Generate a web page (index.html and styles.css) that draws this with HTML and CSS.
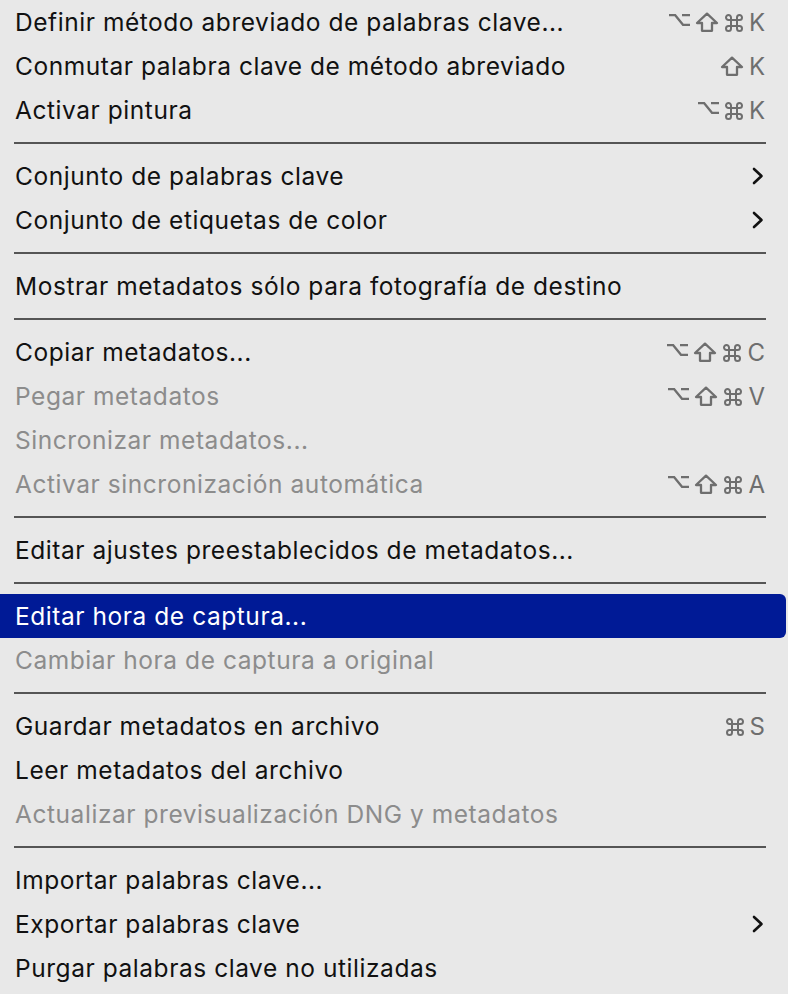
FILE: index.html
```html
<!DOCTYPE html>
<html lang="es">
<head>
<meta charset="utf-8">
<title>Menú Metadatos</title>
<link rel="stylesheet" href="styles.css">
</head>
<body>
<svg class="defs" width="0" height="0" aria-hidden="true">
  <defs>
    <symbol id="opt" viewBox="0 0 21 12"><path d="M0 1.2 H6.2 L14 10.8 H21 M13 1.2 H21" fill="none" stroke="currentColor" stroke-width="2.2"/></symbol>
    <symbol id="shift" viewBox="0 0 24 20"><path d="M12 1.6 L22 11 H17 V18.8 H7 V11 H2 Z" fill="none" stroke="currentColor" stroke-width="2.3" stroke-linejoin="round"/></symbol>
    <symbol id="cmd" viewBox="0 0 20 20"><path d="M7 7 H13 V13 H7 Z M7 7 V4.5 A2.5 2.5 0 1 0 4.5 7 H7 M13 7 V4.5 A2.5 2.5 0 1 1 15.5 7 H13 M13 13 V15.5 A2.5 2.5 0 1 0 15.5 13 H13 M7 13 V15.5 A2.5 2.5 0 1 1 4.5 13 H7" fill="none" stroke="currentColor" stroke-width="2"/></symbol>
    <symbol id="chev" viewBox="0 0 12 18"><path d="M2 2 L9.5 9 L2 16" fill="none" stroke="#111" stroke-width="2.6" stroke-linecap="round" stroke-linejoin="round"/></symbol>
  </defs>
</svg>
<div class="menu">
  <div class="item"><span class="label">Definir método abreviado de palabras clave...</span><span class="keys"><svg class="opt"><use href="#opt"/></svg><svg class="shift"><use href="#shift"/></svg><svg class="cmd"><use href="#cmd"/></svg><span class="key">K</span></span></div>
  <div class="item"><span class="label">Conmutar palabra clave de método abreviado</span><span class="keys"><svg class="shift"><use href="#shift"/></svg><span class="key">K</span></span></div>
  <div class="item"><span class="label">Activar pintura</span><span class="keys"><svg class="opt"><use href="#opt"/></svg><svg class="cmd"><use href="#cmd"/></svg><span class="key">K</span></span></div>
  <div class="sep"></div>
  <div class="item"><span class="label">Conjunto de palabras clave</span><svg class="chev"><use href="#chev"/></svg></div>
  <div class="item"><span class="label">Conjunto de etiquetas de color</span><svg class="chev"><use href="#chev"/></svg></div>
  <div class="sep"></div>
  <div class="item"><span class="label">Mostrar metadatos sólo para fotografía de destino</span></div>
  <div class="sep"></div>
  <div class="item"><span class="label">Copiar metadatos...</span><span class="keys"><svg class="opt"><use href="#opt"/></svg><svg class="shift"><use href="#shift"/></svg><svg class="cmd"><use href="#cmd"/></svg><span class="key">C</span></span></div>
  <div class="item disabled"><span class="label">Pegar metadatos</span><span class="keys"><svg class="opt"><use href="#opt"/></svg><svg class="shift"><use href="#shift"/></svg><svg class="cmd"><use href="#cmd"/></svg><span class="key">V</span></span></div>
  <div class="item disabled"><span class="label">Sincronizar metadatos...</span></div>
  <div class="item disabled"><span class="label">Activar sincronización automática</span><span class="keys"><svg class="opt"><use href="#opt"/></svg><svg class="shift"><use href="#shift"/></svg><svg class="cmd"><use href="#cmd"/></svg><span class="key">A</span></span></div>
  <div class="sep"></div>
  <div class="item"><span class="label">Editar ajustes preestablecidos de metadatos...</span></div>
  <div class="sep"></div>
  <div class="item selected"><span class="label">Editar hora de captura...</span></div>
  <div class="item disabled"><span class="label">Cambiar hora de captura a original</span></div>
  <div class="sep"></div>
  <div class="item"><span class="label">Guardar metadatos en archivo</span><span class="keys"><svg class="cmd"><use href="#cmd"/></svg><span class="key">S</span></span></div>
  <div class="item"><span class="label">Leer metadatos del archivo</span></div>
  <div class="item disabled"><span class="label">Actualizar previsualización DNG y metadatos</span></div>
  <div class="sep"></div>
  <div class="item"><span class="label">Importar palabras clave...</span></div>
  <div class="item"><span class="label">Exportar palabras clave</span><svg class="chev"><use href="#chev"/></svg></div>
  <div class="item"><span class="label">Purgar palabras clave no utilizadas</span></div>
</div>
</body>
</html>
```
FILE: styles.css
```css
html, body {
  margin: 0;
  padding: 0;
  background: #e8e8e8;
}
body {
  width: 788px;
  height: 994px;
  overflow: hidden;
  font-family: "Inter", "Noto Sans", sans-serif;
}
.defs {
  position: absolute;
  width: 0;
  height: 0;
}
.menu {
  display: flex;
  flex-direction: column;
  width: 786px;
}
.item {
  height: 44px;
  display: flex;
  align-items: center;
  justify-content: space-between;
  padding: 0 20px 0 15px;
  font-size: 24.5px;
  color: #111;
  letter-spacing: 0.55px;
}
.item.disabled .label {
  color: #8c8c8c;
}
.item.selected {
  background: #001a96;
  color: #fff;
  border-radius: 0 6px 6px 0;
}
.keys {
  display: flex;
  align-items: center;
  gap: 5px;
  color: #6e6e6e;
  margin-right: 1px;
}
.keys svg {
  display: block;
  flex-shrink: 0;
}
.opt {
  width: 21px;
  height: 12px;
  margin-bottom: 4px;
}
.shift {
  width: 24px;
  height: 20px;
  margin-bottom: 1px;
}
.cmd {
  width: 20px;
  height: 20px;
  margin-top: 2px;
}
.key {
  font-size: 24px;
  letter-spacing: 0;
  line-height: 1;
  margin-top: 2px;
}
.chev {
  width: 12px;
  height: 18px;
  margin-right: 2px;
}
.sep {
  height: 22px;
  display: flex;
  align-items: center;
  padding: 0 20px 0 14px;
}
.sep::before {
  content: "";
  flex: 1;
  height: 2px;
  background: #555;
}
```
